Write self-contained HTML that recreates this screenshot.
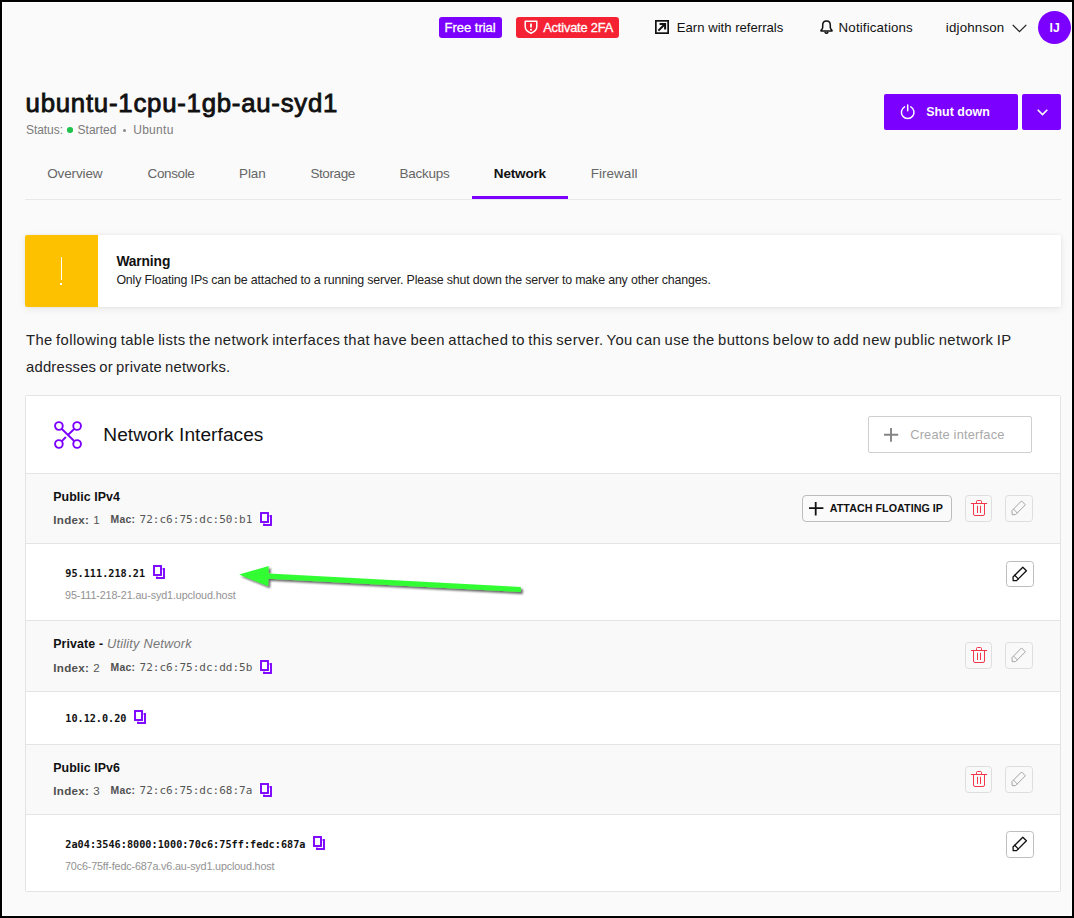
<!DOCTYPE html>
<html lang="en">
<head>
<meta charset="utf-8">
<title>ubuntu-1cpu-1gb-au-syd1 - Network</title>
<style>
*{box-sizing:border-box}
html,body{margin:0;padding:0}
body{width:1074px;height:918px;position:relative;overflow:hidden;background:#fafafa;
  font-family:"Liberation Sans",sans-serif;color:#222;-webkit-font-smoothing:antialiased}
.frame{position:absolute;left:0;top:0;width:1074px;height:918px;pointer-events:none;z-index:50;
  box-shadow:inset 0 0 0 2px #000,inset 0 0 0 3px #fff}
.abs{position:absolute}
.t{position:absolute;white-space:nowrap;display:block;margin:0;padding:0}
.mono{font-family:"DejaVu Sans Mono","Liberation Mono",monospace}
.ico{position:absolute;display:block;overflow:visible}
header,nav,section,.row,.alert,.pagehead{position:absolute}
.badge{position:absolute;height:21px;border-radius:3px;color:#fff}
button{font-family:inherit;margin:0;padding:0;cursor:pointer}
.ibtn{position:absolute;border:1px solid #bdbdbd;border-radius:3.5px;background:#fff;display:block}
.ibtn svg{position:absolute;left:-1px;top:-1px}
.ibtn.dis{border-color:#dedede;background:#f9f9f9}
.row{left:0;width:1034px;border-bottom:1px solid #e4e4e4}
.row.head{background:#f9f9f9}
.row.ip{background:#fff}
</style>
</head>
<body>

<header style="left:0;top:0;width:1074px;height:55px">
<span class="badge" style="left:439px;top:17px;width:63px;background:#7b00ff">
<span id="t_free" class="t" style="left:5.50px;top:2.00px;font-size:13px;line-height:17px;color:#fff;letter-spacing:-0.009px;-webkit-text-stroke:0.3px #fff;">Free trial</span>
</span>
<a class="badge" style="left:516px;top:17px;width:103px;background:#f52233">
<svg class="ico" style="left:7.6px;top:3px" width="14" height="14" viewBox="0 0 14 14" fill="none" stroke="#fff" stroke-width="1.5" stroke-linejoin="round"><path d="M1.2 1.2H12.8V6.6C12.8 9.8 10.4 12 7 13.2C3.6 12 1.2 9.8 1.2 6.6Z"/><path d="M7 3.6V7.4" stroke-width="1.8"/><circle cx="7" cy="9.7" r="1" fill="#fff" stroke="none"/></svg>
<span id="t_2fa" class="t" style="left:27.20px;top:2.00px;font-size:12.8px;line-height:17px;color:#fff;letter-spacing:-0.155px;-webkit-text-stroke:0.3px #fff;">Activate 2FA</span>
</a>
<a class="abs" style="left:655px;top:14px;width:130px;height:26px">
<svg class="ico" style="left:-0.2px;top:6px" width="14" height="14" viewBox="0 0 14 14" fill="none" stroke="#111" stroke-width="1.7"><rect x="0.85" y="0.85" width="12.3" height="12.3"/><path d="M3.4 10.6L10 4M4.6 3.9H10.1V9.4" stroke-width="2"/></svg>
<span id="t_earn" class="t" style="left:21.80px;top:5.00px;font-size:13.1px;line-height:17px;color:#111;letter-spacing:0.016px;">Earn with referrals</span>
</a>
<a class="abs" style="left:820px;top:14px;width:95px;height:26px">
<svg class="ico" style="left:0.3px;top:6.4px" width="13" height="14" viewBox="0 0 13 14" fill="none" stroke="#111" stroke-width="1.5" stroke-linejoin="round" stroke-linecap="round"><path d="M6.5 1.1C4 1.1 2.7 3 2.7 5.2V7.6C2.7 8.7 1.9 9.6 1 10.3V10.9H12V10.3C11.1 9.6 10.3 8.7 10.3 7.6V5.2C10.3 3 9 1.1 6.5 1.1Z"/><path d="M5.1 12.3C5.4 12.9 5.9 13.2 6.5 13.2S7.6 12.9 7.9 12.3"/></svg>
<span id="t_notif" class="t" style="left:18.60px;top:5.00px;font-size:13.3px;line-height:17px;color:#111;letter-spacing:0.143px;">Notifications</span>
</a>
<div class="abs" style="left:946px;top:10px;width:126px;height:35px">
<span id="t_user" class="t" style="left:-0.20px;top:9.00px;font-size:13.3px;line-height:17px;color:#111;letter-spacing:0.184px;">idjohnson</span>
<svg class="ico" style="left:65.5px;top:14px" width="15" height="9" viewBox="0 0 15 9" fill="none" stroke="#222" stroke-width="1.3"><path d="M0.7 0.9L7.5 7.7L14.3 0.9"/></svg>
<span class="abs" style="left:92px;top:1px;width:33px;height:33px;border-radius:50%;background:#7b00ff">
<span id="t_ij" class="t" style="left:11.50px;top:9.00px;font-size:12.3px;line-height:16px;font-weight:700;color:#fff;">IJ</span>
</span></div>
</header>
<div class="pagehead" style="left:25px;top:80px;width:1036px;height:65px">
<h1 id="t_title" class="t" style="left:0.60px;top:8.00px;font-size:25.8px;line-height:30px;font-weight:400;color:#111;letter-spacing:0.745px;-webkit-text-stroke:0.85px #111;">ubuntu-1cpu-1gb-au-syd1</h1>
<div class="abs" style="left:0;top:42px;width:200px;height:16px">
<span id="t_status" class="t" style="left:1.00px;top:0.00px;font-size:12px;line-height:16px;color:#7a7a7a;letter-spacing:-0.065px;">Status:</span>
<span class="abs" style="left:42.3px;top:5.4px;width:5.6px;height:5.6px;border-radius:50%;background:#1fc24a"></span>
<span id="t_started" class="t" style="left:52.50px;top:0.00px;font-size:12px;line-height:16px;color:#7a7a7a;letter-spacing:0.03px;">Started</span>
<span class="abs" style="left:98.2px;top:6.6px;width:3.2px;height:3.2px;border-radius:50%;background:#8a8a8a"></span>
<span id="t_ubuntu" class="t" style="left:108.20px;top:0.00px;font-size:12px;line-height:16px;color:#7a7a7a;letter-spacing:0.284px;">Ubuntu</span>
</div>
<button class="abs" style="left:859px;top:14px;width:134px;height:36px;border:0;border-radius:2px;background:#7b00ff;color:#fff">
<svg class="ico" style="left:15.5px;top:10.2px" width="16" height="16" viewBox="0 0 16 16" fill="none" stroke="#fff" stroke-width="1.5" stroke-linecap="round"><path d="M7.7 0.9V6.8"/><path d="M4.6 2.8A6.3 6.3 0 1 0 10.8 2.8"/></svg>
<span id="t_shut" class="t" style="left:42.20px;top:10.00px;font-size:12.4px;line-height:16px;font-weight:700;color:#fff;letter-spacing:0.037px;">Shut down</span>
</button>
<button class="abs" style="left:997px;top:14px;width:39px;height:36px;border:0;border-radius:2px;background:#7b00ff" title="More actions">
<svg class="ico" style="left:15px;top:14.6px" width="11" height="7" viewBox="0 0 11 7" fill="none" stroke="#fff" stroke-width="1.6"><path d="M0.7 0.8L5.5 5.6L10.3 0.8"/></svg>
</button>
</div>
<nav style="left:25px;top:150px;width:1036px;height:50px;border-bottom:1px solid #e8e8e8">
<a id="tab0" class="t" style="left:22.20px;top:15.00px;font-size:13.5px;line-height:17px;color:#666;letter-spacing:-0.133px;">Overview</a>
<a id="tab1" class="t" style="left:122.50px;top:15.00px;font-size:13.5px;line-height:17px;color:#666;letter-spacing:-0.362px;">Console</a>
<a id="tab2" class="t" style="left:214.00px;top:15.00px;font-size:13.5px;line-height:17px;color:#666;letter-spacing:-0.105px;">Plan</a>
<a id="tab3" class="t" style="left:285.40px;top:15.00px;font-size:13.5px;line-height:17px;color:#666;letter-spacing:-0.398px;">Storage</a>
<a id="tab4" class="t" style="left:374.60px;top:15.00px;font-size:13.5px;line-height:17px;color:#666;letter-spacing:-0.254px;">Backups</a>
<a id="tab5" class="t" style="left:468.80px;top:15.00px;font-size:13.5px;line-height:17px;font-weight:700;color:#111;letter-spacing:-0.166px;">Network</a>
<a id="tab6" class="t" style="left:565.80px;top:15.00px;font-size:13.5px;line-height:17px;color:#666;letter-spacing:0.012px;">Firewall</a>
<span class="abs" style="left:447px;top:46px;width:96px;height:3.4px;background:#7b00ff"></span>
</nav>
<div class="alert" style="left:25px;top:235px;width:1036px;height:71.5px;background:#fff;border-radius:2px;box-shadow:0 2px 8px rgba(0,0,0,.075),0 0 3px rgba(0,0,0,.06)">
<div class="abs" style="left:0;top:0;width:73px;height:71.5px;background:#fdc100;border-radius:2px 0 0 2px">
<span class="abs" style="left:35.5px;top:22px;width:1.6px;height:22.5px;background:#fff"></span>
<span class="abs" style="left:35.3px;top:47.6px;width:2px;height:2.4px;background:#fff"></span>
</div>
<strong id="t_warn" class="t" style="left:91.40px;top:18.00px;font-size:13.8px;line-height:17px;font-weight:700;color:#111;letter-spacing:-0.126px;">Warning</strong>
<span id="t_wbody" class="t" style="left:91.40px;top:37.00px;font-size:12.4px;line-height:16px;color:#222;letter-spacing:-0.159px;">Only Floating IPs can be attached to a running server. Please shut down the server to make any other changes.</span>
</div>
<p class="abs" style="left:25px;top:322px;width:1036px;height:62px;margin:0">
<span id="t_p1" class="t" style="left:1.00px;top:9.00px;font-size:14.8px;line-height:18px;color:#222;letter-spacing:0.412px;word-spacing:-1.2px;">The following table lists the network interfaces that have been attached to this server. You can use the buttons below to add new public network IP</span>
<span id="t_p2" class="t" style="left:1.00px;top:36.00px;font-size:14.8px;line-height:18px;color:#222;letter-spacing:0.216px;word-spacing:-1.2px;">addresses or private networks.</span>
</p>
<section style="left:25px;top:395px;width:1036px;height:497px;border:1px solid #e4e4e4;border-radius:2px;background:#fff">
<div class="row" style="top:0;height:78px;background:#fff">
<svg class="ico" style="left:22px;top:18px" width="40" height="42" viewBox="0 0 40 42" fill="none" stroke="#7b00ff" stroke-width="1.9"><circle cx="10.9" cy="12" r="3.85"/><circle cx="29.1" cy="12" r="3.85"/><circle cx="10.9" cy="30" r="3.85"/><circle cx="29.1" cy="30" r="3.85"/><path d="M13.6 14.7L26.4 27.3M26.4 14.7L20.2 20.8M13.6 27.3L17.9 23"/></svg>
<h2 id="t_ni" class="t" style="left:77.30px;top:27.00px;font-size:19.1px;line-height:23px;font-weight:400;color:#111;letter-spacing:0.054px;">Network Interfaces</h2>
<button class="abs" style="left:842px;top:20px;width:164px;height:37px;border:1px solid #cfcfcf;border-radius:2px;background:#fff">
<svg class="ico" style="left:15px;top:10.8px" width="15" height="14" viewBox="0 0 15 14" fill="none" stroke="#858585" stroke-width="1.9"><path d="M0 6.7H14.2M7 0V13.8"/></svg>
<span id="t_create" class="t" style="left:41.20px;top:9.00px;font-size:12.8px;line-height:17px;color:#a9a9a9;letter-spacing:0.208px;">Create interface</span>
</button>
</div>
<div class="row head" style="top:78px;height:70px">
<h3 id="t_h1" class="t" style="left:27.20px;top:15.00px;font-size:12.4px;line-height:16px;font-weight:700;color:#111;letter-spacing:0.058px;">Public IPv4</h3>
<span id="t_idx1" class="t" style="left:27.30px;top:39.00px;font-size:11.6px;line-height:14px;font-weight:700;color:#505050;letter-spacing:0.29px;">Index:</span>
<span class="t" style="left:67.20px;top:39.00px;font-size:11.6px;line-height:14px;color:#555;">1</span>
<span id="t_mac1" class="t" style="left:84.60px;top:39.00px;font-size:10.4px;line-height:13px;font-weight:700;color:#505050;letter-spacing:0.251px;">Mac:</span>
<span id="t_macv1" class="t mono" style="left:113.60px;top:38.00px;font-size:11.03px;line-height:15px;color:#555;">72:c6:75:dc:50:b1</span>
<svg class="ico" style="left:233.0px;top:37.0px" width="14" height="16" viewBox="-1 -1 14 16"><rect x="4" y="4" width="7" height="9" fill="none" stroke="#7b00ff" stroke-width="1.9"/><rect x="-0.6" y="-0.6" width="10.2" height="12.2" fill="#fff"/><rect x="1" y="1" width="7" height="9" fill="#fff" stroke="#7b00ff" stroke-width="1.9"/></svg>
<button class="abs" style="left:776px;top:21px;width:150px;height:27px;border:1px solid #bdbdbd;border-radius:4px;background:#fafafa">
<svg class="ico" style="left:6px;top:5.5px" width="15" height="14" viewBox="0 0 15 14" fill="none" stroke="#111" stroke-width="1.8"><path d="M0 6.1H14.4M6.7 0V13.4"/></svg>
<span id="t_attach" class="t" style="left:26.80px;top:5.00px;font-size:10.7px;line-height:14px;font-weight:700;color:#111;letter-spacing:0.059px;">ATTACH FLOATING IP</span>
</button>
<button class="ibtn dis" style="left:939px;top:21px;width:27px;height:27px" title="Delete interface"><svg width="27" height="27" viewBox="0 0 27 27" fill="none" stroke="#f2364c" stroke-width="1" stroke-linecap="round" stroke-linejoin="round"><path d="M6.3 8.5H21.7"/><path d="M11.5 8.5V6.5a1 1 0 0 1 1-1h3a1 1 0 0 1 1 1v2"/><path d="M8.5 8.5V19a1.5 1.5 0 0 0 1.5 1.5h8a1.5 1.5 0 0 0 1.5-1.5V8.5"/><path d="M12.5 11.2V17.6M15.5 11.2V17.6"/></svg></button>
<button class="ibtn dis" style="left:979px;top:21px;width:28px;height:27px" title="Edit"><svg width="28" height="27" viewBox="0 0 28 27" fill="none" stroke="#a4a4a4" stroke-width="1" stroke-linejoin="round" stroke-linecap="round"><path d="M16.8 6.2L20.4 9.8L10.6 19.6L7.2 19.7L7 16Z"/><path d="M8.7 14.3L12.3 17.9"/></svg></button>
</div>
<div class="row ip" style="top:148px;height:77px">
<span id="t_ip2" class="t mono" style="left:39.30px;top:23.00px;font-size:10.2px;line-height:13px;font-weight:700;color:#111;letter-spacing:0.005px;">95.111.218.21</span>
<svg class="ico" style="left:126.0px;top:20.0px" width="14" height="16" viewBox="-1 -1 14 16"><rect x="4" y="4" width="7" height="9" fill="none" stroke="#7b00ff" stroke-width="1.9"/><rect x="-0.6" y="-0.6" width="10.2" height="12.2" fill="#fff"/><rect x="1" y="1" width="7" height="9" fill="#fff" stroke="#7b00ff" stroke-width="1.9"/></svg>
<span id="t_host2" class="t" style="left:39.00px;top:44.00px;font-size:10.8px;line-height:14px;color:#929292;letter-spacing:-0.127px;">95-111-218-21.au-syd1.upcloud.host</span>
<button class="ibtn" style="left:980px;top:17px;width:28px;height:26px" title="Edit"><svg width="28" height="27" viewBox="0 0 28 27" fill="none" stroke="#111" stroke-width="1.3" stroke-linejoin="round" stroke-linecap="round"><path d="M16.8 6.2L20.4 9.8L10.6 19.6L7.2 19.7L7 16Z"/><path d="M8.7 14.3L12.3 17.9"/></svg></button>
</div>
<div class="row head" style="top:225px;height:71px">
<h3 id="t_h3" class="t" style="left:27.20px;top:15.00px;font-size:12.4px;line-height:16px;font-weight:700;color:#111;letter-spacing:0.118px;">Private -</h3><em id="t_util" class="t" style="left:81.00px;top:14.00px;font-size:12.8px;line-height:17px;font-weight:400;color:#777;letter-spacing:0.201px;font-style:italic;">Utility Network</em>
<span id="t_idx3" class="t" style="left:27.30px;top:40.00px;font-size:11.6px;line-height:14px;font-weight:700;color:#505050;letter-spacing:0.29px;">Index:</span>
<span class="t" style="left:67.20px;top:40.00px;font-size:11.6px;line-height:14px;color:#555;">2</span>
<span id="t_mac3" class="t" style="left:84.60px;top:40.00px;font-size:10.4px;line-height:13px;font-weight:700;color:#505050;letter-spacing:0.251px;">Mac:</span>
<span id="t_macv3" class="t mono" style="left:113.60px;top:39.00px;font-size:11.03px;line-height:15px;color:#555;">72:c6:75:dc:dd:5b</span>
<svg class="ico" style="left:233.0px;top:38.0px" width="14" height="16" viewBox="-1 -1 14 16"><rect x="4" y="4" width="7" height="9" fill="none" stroke="#7b00ff" stroke-width="1.9"/><rect x="-0.6" y="-0.6" width="10.2" height="12.2" fill="#fff"/><rect x="1" y="1" width="7" height="9" fill="#fff" stroke="#7b00ff" stroke-width="1.9"/></svg>
<button class="ibtn dis" style="left:939px;top:21px;width:27px;height:27px" title="Delete interface"><svg width="27" height="27" viewBox="0 0 27 27" fill="none" stroke="#f2364c" stroke-width="1" stroke-linecap="round" stroke-linejoin="round"><path d="M6.3 8.5H21.7"/><path d="M11.5 8.5V6.5a1 1 0 0 1 1-1h3a1 1 0 0 1 1 1v2"/><path d="M8.5 8.5V19a1.5 1.5 0 0 0 1.5 1.5h8a1.5 1.5 0 0 0 1.5-1.5V8.5"/><path d="M12.5 11.2V17.6M15.5 11.2V17.6"/></svg></button>
<button class="ibtn dis" style="left:979px;top:21px;width:28px;height:27px" title="Edit"><svg width="28" height="27" viewBox="0 0 28 27" fill="none" stroke="#a4a4a4" stroke-width="1" stroke-linejoin="round" stroke-linecap="round"><path d="M16.8 6.2L20.4 9.8L10.6 19.6L7.2 19.7L7 16Z"/><path d="M8.7 14.3L12.3 17.9"/></svg></button>
</div>
<div class="row ip" style="top:296px;height:53px">
<span id="t_ip4" class="t mono" style="left:39.30px;top:20.00px;font-size:10.2px;line-height:13px;font-weight:700;color:#111;letter-spacing:-0.021px;">10.12.0.20</span>
<svg class="ico" style="left:107.0px;top:17.0px" width="14" height="16" viewBox="-1 -1 14 16"><rect x="4" y="4" width="7" height="9" fill="none" stroke="#7b00ff" stroke-width="1.9"/><rect x="-0.6" y="-0.6" width="10.2" height="12.2" fill="#fff"/><rect x="1" y="1" width="7" height="9" fill="#fff" stroke="#7b00ff" stroke-width="1.9"/></svg>
</div>
<div class="row head" style="top:349px;height:70px">
<h3 id="t_h5" class="t" style="left:27.20px;top:15.00px;font-size:12.4px;line-height:16px;font-weight:700;color:#111;letter-spacing:0.058px;">Public IPv6</h3>
<span id="t_idx5" class="t" style="left:27.30px;top:39.00px;font-size:11.6px;line-height:14px;font-weight:700;color:#505050;letter-spacing:0.29px;">Index:</span>
<span class="t" style="left:67.20px;top:39.00px;font-size:11.6px;line-height:14px;color:#555;">3</span>
<span id="t_mac5" class="t" style="left:84.60px;top:39.00px;font-size:10.4px;line-height:13px;font-weight:700;color:#505050;letter-spacing:0.251px;">Mac:</span>
<span id="t_macv5" class="t mono" style="left:113.60px;top:38.00px;font-size:11.03px;line-height:15px;color:#555;">72:c6:75:dc:68:7a</span>
<svg class="ico" style="left:233.0px;top:37.0px" width="14" height="16" viewBox="-1 -1 14 16"><rect x="4" y="4" width="7" height="9" fill="none" stroke="#7b00ff" stroke-width="1.9"/><rect x="-0.6" y="-0.6" width="10.2" height="12.2" fill="#fff"/><rect x="1" y="1" width="7" height="9" fill="#fff" stroke="#7b00ff" stroke-width="1.9"/></svg>
<button class="ibtn dis" style="left:939px;top:21px;width:27px;height:27px" title="Delete interface"><svg width="27" height="27" viewBox="0 0 27 27" fill="none" stroke="#f2364c" stroke-width="1" stroke-linecap="round" stroke-linejoin="round"><path d="M6.3 8.5H21.7"/><path d="M11.5 8.5V6.5a1 1 0 0 1 1-1h3a1 1 0 0 1 1 1v2"/><path d="M8.5 8.5V19a1.5 1.5 0 0 0 1.5 1.5h8a1.5 1.5 0 0 0 1.5-1.5V8.5"/><path d="M12.5 11.2V17.6M15.5 11.2V17.6"/></svg></button>
<button class="ibtn dis" style="left:979px;top:21px;width:28px;height:27px" title="Edit"><svg width="28" height="27" viewBox="0 0 28 27" fill="none" stroke="#a4a4a4" stroke-width="1" stroke-linejoin="round" stroke-linecap="round"><path d="M16.8 6.2L20.4 9.8L10.6 19.6L7.2 19.7L7 16Z"/><path d="M8.7 14.3L12.3 17.9"/></svg></button>
</div>
<div class="row ip" style="top:419px;height:77px">
<span id="t_ip6" class="t mono" style="left:39.30px;top:23.00px;font-size:10.2px;line-height:13px;font-weight:700;color:#111;letter-spacing:0.026px;">2a04:3546:8000:1000:70c6:75ff:fedc:687a</span>
<svg class="ico" style="left:286.0px;top:20.0px" width="14" height="16" viewBox="-1 -1 14 16"><rect x="4" y="4" width="7" height="9" fill="none" stroke="#7b00ff" stroke-width="1.9"/><rect x="-0.6" y="-0.6" width="10.2" height="12.2" fill="#fff"/><rect x="1" y="1" width="7" height="9" fill="#fff" stroke="#7b00ff" stroke-width="1.9"/></svg>
<span id="t_host6" class="t" style="left:39.00px;top:44.00px;font-size:10.8px;line-height:14px;color:#929292;letter-spacing:-0.166px;">70c6-75ff-fedc-687a.v6.au-syd1.upcloud.host</span>
<button class="ibtn" style="left:980px;top:16px;width:28px;height:27px" title="Edit"><svg width="28" height="27" viewBox="0 0 28 27" fill="none" stroke="#111" stroke-width="1.3" stroke-linejoin="round" stroke-linecap="round"><path d="M16.8 6.2L20.4 9.8L10.6 19.6L7.2 19.7L7 16Z"/><path d="M8.7 14.3L12.3 17.9"/></svg></button>
</div>
</section>
<svg class="ico" style="left:230px;top:555px;z-index:20" width="310" height="50" viewBox="230 555 310 50"><defs><filter id="sh" x="-5%" y="-30%" width="110%" height="170%"><feGaussianBlur in="SourceAlpha" stdDeviation="1.3"/><feOffset dx="2" dy="2.3"/><feComponentTransfer><feFuncA type="linear" slope="0.62"/></feComponentTransfer><feMerge><feMergeNode/><feMergeNode in="SourceGraphic"/></feMerge></filter></defs><path filter="url(#sh)" fill="#32fd32" d="M239.1 574.4L268.7 566.1L268.5 573.6L520.9 587L520.7 592L268.3 578.8L268.1 586.3Z"/></svg>
<div class="frame"></div>
</body>
</html>
